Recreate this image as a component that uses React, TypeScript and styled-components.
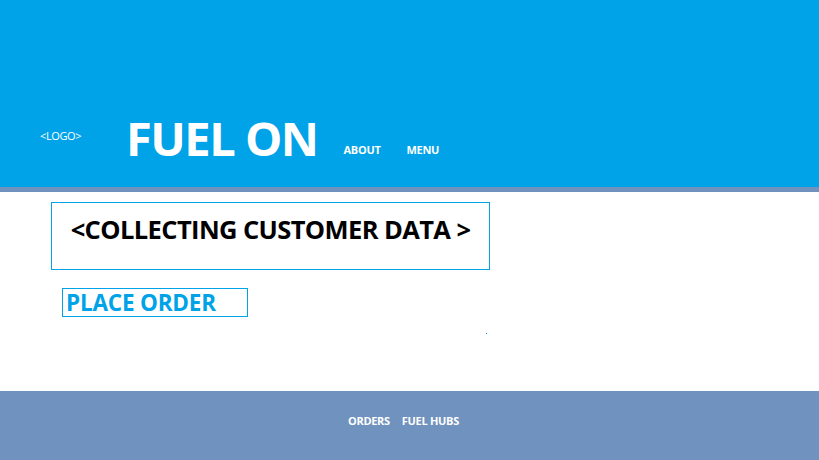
import styled, { createGlobalStyle } from "styled-components";

const GlobalStyle = createGlobalStyle`
  html, body {
    margin: 0;
    padding: 0;
    background: #ffffff;
  }
  body {
    font-family: "Open Sans", "Noto Sans", sans-serif;
  }
`;

const Page = styled.div`
  width: 819px;
  height: 460px;
  display: flex;
  flex-direction: column;
  overflow: hidden;
`;

const Header = styled.header`
  height: 187px;
  flex: none;
  background: #00a2e8;
  border-bottom: 5px solid #7092be;
  display: flex;
  align-items: flex-start;
  padding-left: 40px;
  color: #ffffff;
`;

const Logo = styled.div`
  margin-top: 129px;
  font-size: 11px;
  line-height: 14px;
  letter-spacing: -0.4px;
`;

const Title = styled.h1`
  margin: 109px 0 0 45px;
  font-size: 47px;
  line-height: 58px;
  font-weight: 700;
  letter-spacing: -1.5px;
`;

const Nav = styled.nav`
  display: flex;
  gap: 26px;
  margin: 142px 0 0 26px;
`;

const NavLink = styled.a`
  font-size: 11px;
  line-height: 16px;
  font-weight: 700;
  color: #ffffff;
  letter-spacing: -0.3px;
  text-decoration: none;
`;

const Main = styled.main`
  flex: 1;
  display: flex;
  flex-direction: column;
  align-items: flex-start;
  padding: 10px 0 0 51px;
`;

const DataBox = styled.section`
  width: 437px;
  height: 56px;
  border: 1px solid #00a2e8;
  display: flex;
  justify-content: center;
  padding-top: 10px;
  box-sizing: content-box;
`;

const DataText = styled.h2`
  margin: 0;
  font-size: 25.5px;
  line-height: 32px;
  font-weight: 700;
  color: #000000;
  letter-spacing: -0.6px;
`;

const OrderButton = styled.button`
  margin: 18px 0 0 11px;
  width: 186px;
  height: 29px;
  border: 1px solid #00a2e8;
  background: #ffffff;
  padding: 0 0 0 3px;
  text-align: left;
  font-family: inherit;
  font-size: 22.5px;
  line-height: 27px;
  font-weight: 700;
  color: #00a2e8;
  letter-spacing: -0.2px;
`;

const Speck = styled.span`
  width: 1px;
  height: 1px;
  background: #00a2e8;
  margin: 16px 0 0 435px;
`;

const Footer = styled.footer`
  height: 69px;
  flex: none;
  background: #7092be;
  display: flex;
  align-items: flex-start;
  gap: 12px;
  padding: 22px 0 0 348px;
  box-sizing: border-box;
`;

export default function App() {
  return (
    <>
      <GlobalStyle />
      <Page>
        <Header>
          <Logo>&lt;LOGO&gt;</Logo>
          <Title>FUEL ON</Title>
          <Nav>
            <NavLink>ABOUT</NavLink>
            <NavLink>MENU</NavLink>
          </Nav>
        </Header>
        <Main>
          <DataBox>
            <DataText>&lt;COLLECTING CUSTOMER DATA &gt;</DataText>
          </DataBox>
          <OrderButton>PLACE ORDER</OrderButton>
          <Speck />
        </Main>
        <Footer>
          <NavLink>ORDERS</NavLink>
          <NavLink>FUEL HUBS</NavLink>
        </Footer>
      </Page>
    </>
  );
}
